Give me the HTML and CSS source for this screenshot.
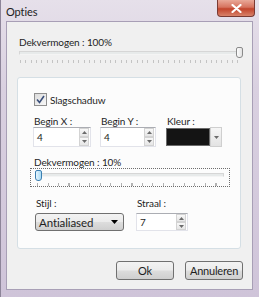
FILE: index.html
```html
<!DOCTYPE html>
<html lang="nl">

<head>
    <meta charset="UTF-8">
    <title>Opties</title>
    <link rel="stylesheet" href="styles.css">
</head>

<body>
    <div class="window">
        <div class="titlebar">
            <span class="title">Opties</span>
            <button class="close">
                <svg width="11" height="9" viewBox="0 0 11 9">
                    <path d="M1.5 1 L9.5 8 M9.5 1 L1.5 8" stroke="#fff" stroke-width="2.2" stroke-linecap="round" />
                </svg>
            </button>
        </div>

        <div class="client">
            <div class="label">Dekvermogen : 100%</div>
            <div class="slider slider-top">
                <div class="track"></div>
                <div class="thumb thumb-end"></div>
                <div class="ticks ticks-fine"></div>
            </div>

            <div class="group">
                <label class="check-row">
                    <span class="checkbox">
                        <svg width="9" height="9" viewBox="0 0 9 9">
                            <path d="M1 4.5 L3.5 7.5 L8 1" fill="none" stroke="#3a4f7a" stroke-width="1.6" />
                        </svg>
                    </span>
                    Slagschaduw
                </label>

                <div class="row">
                    <div class="field field-x">
                        <div class="label">Begin X :</div>
                        <div class="spin">
                            <span class="value">4</span>
                            <div class="spin-btns">
                                <span class="spin-btn">
                                    <svg width="5" height="3" viewBox="0 0 5 3"><path d="M0 3 L2.5 0 L5 3Z" fill="#6b6b6b" /></svg>
                                </span>
                                <span class="spin-btn">
                                    <svg width="5" height="3" viewBox="0 0 5 3"><path d="M0 0 L2.5 3 L5 0Z" fill="#6b6b6b" /></svg>
                                </span>
                            </div>
                        </div>
                    </div>
                    <div class="field field-y">
                        <div class="label">Begin Y :</div>
                        <div class="spin">
                            <span class="value">4</span>
                            <div class="spin-btns">
                                <span class="spin-btn">
                                    <svg width="5" height="3" viewBox="0 0 5 3"><path d="M0 3 L2.5 0 L5 3Z" fill="#6b6b6b" /></svg>
                                </span>
                                <span class="spin-btn">
                                    <svg width="5" height="3" viewBox="0 0 5 3"><path d="M0 0 L2.5 3 L5 0Z" fill="#6b6b6b" /></svg>
                                </span>
                            </div>
                        </div>
                    </div>
                    <div class="field field-color">
                        <div class="label">Kleur :</div>
                        <div class="color-pick">
                            <span class="swatch"></span>
                            <span class="color-btn">
                                <svg width="5" height="3" viewBox="0 0 5 3"><path d="M0 0 L2.5 3 L5 0Z" fill="#6b6b6b" /></svg>
                            </span>
                        </div>
                    </div>
                </div>

                <div class="label label-opacity">Dekvermogen : 10%</div>
                <div class="slider slider-focus">
                    <div class="track"></div>
                    <div class="thumb thumb-start"></div>
                    <div class="ticks ticks-wide"></div>
                </div>

                <div class="row row-style">
                    <div class="field field-style">
                        <div class="label">Stijl :</div>
                        <div class="combo">
                            <span>Antialiased</span>
                            <svg width="7" height="4" viewBox="0 0 7 4"><path d="M0 0 L3.5 4 L7 0Z" fill="#000" /></svg>
                        </div>
                    </div>
                    <div class="field field-radius">
                        <div class="label">Straal :</div>
                        <div class="spin">
                            <span class="value">7</span>
                            <div class="spin-btns">
                                <span class="spin-btn">
                                    <svg width="5" height="3" viewBox="0 0 5 3"><path d="M0 3 L2.5 0 L5 3Z" fill="#6b6b6b" /></svg>
                                </span>
                                <span class="spin-btn">
                                    <svg width="5" height="3" viewBox="0 0 5 3"><path d="M0 0 L2.5 3 L5 0Z" fill="#6b6b6b" /></svg>
                                </span>
                            </div>
                        </div>
                    </div>
                </div>
            </div>

            <div class="buttons">
                <button class="btn">Ok</button>
                <button class="btn">Annuleren</button>
            </div>
        </div>
    </div>
</body>

</html>
```

FILE: styles.css
```css
body {
    margin: 0;
    padding: 0;
    font-family: Lato, "Noto Sans", sans-serif;
    font-size: 10px;
    letter-spacing: -0.1px;
    color: #1e1e1e;
}

.window {
    width: 259px;
    height: 297px;
    box-sizing: border-box;
    padding: 0 6px 0 5px;
    background: linear-gradient(to bottom, #e6e0ea 0%, #d9d0e0 30%, #cfc4d9 100%);
    border-left: 1px solid #8d8599;
    display: flex;
    flex-direction: column;
}

.titlebar {
    height: 21px;
    display: flex;
    align-items: flex-start;
}

.title {
    margin-top: 5px;
    font-size: 11px;
    color: #222;
}

.close {
    margin-left: auto;
    margin-right: -2px;
    width: 38px;
    height: 17px;
    padding: 0;
    border: 1px solid #7a3a33;
    border-top: none;
    border-radius: 0 0 4px 4px;
    background: linear-gradient(to bottom, #e9a898 0%, #d6735f 45%, #c2442c 55%, #d8826a 100%);
    display: flex;
    align-items: center;
    justify-content: center;
}

.client {
    height: 269px;
    box-sizing: border-box;
    background: #f0f0f0;
    border: 1px solid #a89fb6;
    padding: 15px 0 0 12px;
    display: flex;
    flex-direction: column;
}

.label {
    line-height: 11px;
    height: 11px;
    white-space: nowrap;
}

.slider {
    position: relative;
    height: 18px;
}

.slider-top {
    width: 224px;
    margin-top: -1px;
}

.track {
    position: absolute;
    left: 0;
    right: 2px;
    top: 4px;
    height: 2px;
    background: #e7eaea;
    border: 1px solid #d6d6d6;
    border-bottom-color: #f4f4f4;
}

.thumb {
    position: absolute;
    top: 0;
    width: 5px;
    height: 9px;
    border: 1px solid #8a8a8a;
    border-radius: 2px 2px 3px 3px;
    background: linear-gradient(to right, #fdfdfd, #e2e2e2);
}

.thumb-end {
    right: 0;
}

.thumb-start {
    left: 4px;
    top: 1px;
    border-color: #3c7fb1;
    background: linear-gradient(to right, #e6f5fd, #a9dbf6);
}

.ticks {
    position: absolute;
    left: 1px;
    right: 3px;
    top: 13px;
    height: 3px;
}

.ticks-fine {
    background: repeating-linear-gradient(to right, #c4c4c4 0, #c4c4c4 1px, transparent 1px, transparent 5.3px);
}

.ticks-wide {
    left: 6px;
    right: 5px;
    top: 14px;
    background: repeating-linear-gradient(to right, #b3b3b3 0, #b3b3b3 1px, transparent 1px, transparent 10.5px);
}

.group {
    margin-top: 12px;
    margin-left: -2px;
    width: 224px;
    height: 172px;
    box-sizing: border-box;
    border: 1px solid #d5dfe5;
    border-radius: 3px;
    background: #fcfcfc;
    padding: 15px 0 0 15px;
    display: flex;
    flex-direction: column;
}

.check-row {
    display: flex;
    align-items: center;
    gap: 3px;
    height: 13px;
    margin-left: 1px;
}

.checkbox {
    width: 11px;
    height: 11px;
    border: 1px solid #8f8f8f;
    background: linear-gradient(135deg, #dcdcdc, #f8f8f8);
    display: flex;
    align-items: center;
    justify-content: center;
}

.row {
    display: flex;
    gap: 9px;
    margin-top: 10px;
}

.field {
    display: flex;
    flex-direction: column;
}

.field .label {
    padding-left: 1px;
}

.field-x {
    width: 58px;
}

.field-y {
    width: 56px;
}

.field-color {
    width: 56px;
    margin-left: 1px;
}

.spin {
    height: 20px;
    box-sizing: border-box;
    background: #fff;
    border: 1px solid #e2e3ea;
    border-top-color: #abadb3;
    display: flex;
    align-items: center;
}

.value {
    flex: 1;
    padding-left: 3px;
    line-height: 18px;
}

.spin-btns {
    display: flex;
    flex-direction: column;
    width: 10px;
    height: 18px;
    margin-right: 1px;
}

.spin-btn {
    flex: 1;
    border: 1px solid #d3d3d3;
    background: linear-gradient(to bottom, #f8f8f8, #e6e6e6);
    display: flex;
    align-items: center;
    justify-content: center;
}

.color-pick {
    height: 20px;
    display: flex;
    align-items: stretch;
}

.swatch {
    flex: 1;
    margin: 1px 0;
    background: #141414;
    border: 1px solid #6a6a6a;
}

.color-btn {
    width: 10px;
    border: 1px solid #cfcfcf;
    background: linear-gradient(to bottom, #f6f6f6, #e3e3e3);
    display: flex;
    align-items: center;
    justify-content: center;
}

.label-opacity {
    margin-top: 10px;
    margin-left: 1px;
}

.slider-focus {
    margin-left: -3px;
    width: 200px;
    height: 19px;
    box-sizing: border-box;
    border: 1px dotted #6e6e6e;
}

.slider-focus .track {
    left: 5px;
    right: 5px;
    top: 4px;
}

.row-style {
    gap: 12px;
    margin-top: 11px;
}

.field-style {
    width: 89px;
    margin-left: 2px;
}

.field-radius {
    width: 52px;
}

.combo,
.btn {
    border: 1px solid #707070;
    border-radius: 3px;
    background: linear-gradient(to bottom, #f3f3f3 0%, #ebebeb 49%, #dddddd 51%, #cfcfcf 100%);
}

.combo {
    margin-top: 4px;
    height: 18px;
    box-sizing: border-box;
    display: flex;
    align-items: center;
    justify-content: space-between;
    padding: 0 5px 0 3px;
    font-size: 11.5px;
}

.field-radius .spin {
    margin-top: 4px;
    height: 18px;
}

.field-radius .spin-btns {
    height: 16px;
}

.field-radius .value {
    line-height: 16px;
}

.buttons {
    margin-top: 12px;
    width: 224px;
    display: flex;
    justify-content: flex-end;
    gap: 11px;
}

.btn {
    width: 58px;
    height: 19px;
    padding: 0;
    font-family: Lato, "Noto Sans", sans-serif;
    font-size: 11px;
    letter-spacing: -0.2px;
    color: #1e1e1e;
}
```
